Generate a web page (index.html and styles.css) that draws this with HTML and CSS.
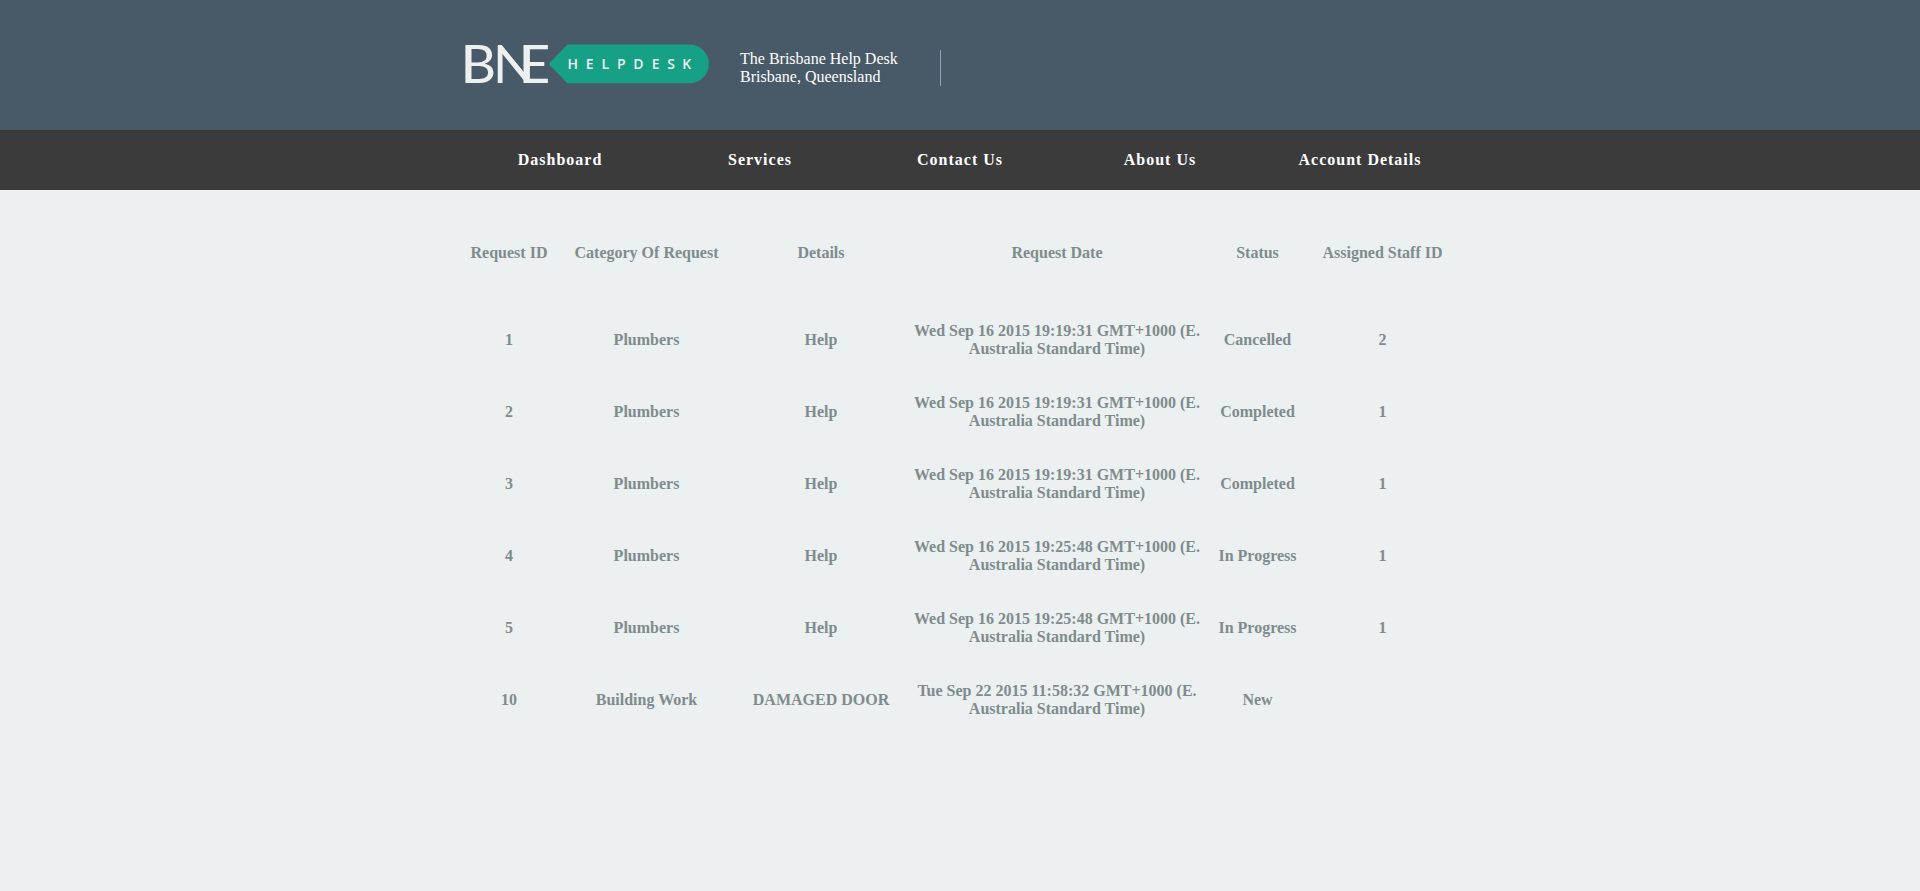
FILE: index.html
```html
<!DOCTYPE html>
<html lang="en">
<head>
<meta charset="utf-8">
<title>BNE Helpdesk</title>
<link rel="stylesheet" href="styles.css">
</head>
<body>
<header class="header">
  <div class="container header-inner">
    <svg class="logo" width="250" height="80" viewBox="0 -18 250 80" role="img" aria-label="BNE Helpdesk">
      <text class="logo-name" transform="translate(0 40.500) scale(1.060 1)" x="0.500 31 55.300">BNE</text>
      <path class="logo-stems" d="M5.800 3.300h5.700v37.200H5.800ZM38.500 3.300H41.500L69.500 37v3.500H66.500ZM65 3.300h4.500v37.200h-4.500Z"/>
      <path class="logo-tag" d="M88.500 22 107.500 2.500H229.500a19.300 19.300 0 0 1 0 38.800H107.500Z"/>
      <text class="logo-word" y="26.600" x="107.500 125.700 141.500 157 173.200 191.700 207.300 222.300">HELPDESK</text>
    </svg>
    <div class="tagline">The Brisbane Help Desk<br>Brisbane, Queensland</div>
  </div>
</header>
<nav class="nav">
  <ul class="container nav-list">
    <li>Dashboard</li><li>Services</li><li>Contact Us</li><li>About Us</li><li>Account Details</li>
  </ul>
</nav>
<main class="container">
  <table class="requests">
    <colgroup><col class="c-id"><col class="c-category"><col class="c-details"><col class="c-date"><col class="c-status"><col class="c-staff"></colgroup>
    <thead>
      <tr><th>Request ID</th><th>Category Of Request</th><th>Details</th><th>Request Date</th><th>Status</th><th>Assigned Staff ID</th></tr>
    </thead>
    <tbody>
      <tr><td>1</td><td>Plumbers</td><td>Help</td><td>Wed Sep 16 2015 19:19:31 GMT+1000 (E. Australia Standard Time)</td><td>Cancelled</td><td>2</td></tr>
      <tr><td>2</td><td>Plumbers</td><td>Help</td><td>Wed Sep 16 2015 19:19:31 GMT+1000 (E. Australia Standard Time)</td><td>Completed</td><td>1</td></tr>
      <tr><td>3</td><td>Plumbers</td><td>Help</td><td>Wed Sep 16 2015 19:19:31 GMT+1000 (E. Australia Standard Time)</td><td>Completed</td><td>1</td></tr>
      <tr><td>4</td><td>Plumbers</td><td>Help</td><td>Wed Sep 16 2015 19:25:48 GMT+1000 (E. Australia Standard Time)</td><td>In Progress</td><td>1</td></tr>
      <tr><td>5</td><td>Plumbers</td><td>Help</td><td>Wed Sep 16 2015 19:25:48 GMT+1000 (E. Australia Standard Time)</td><td>In Progress</td><td>1</td></tr>
      <tr><td>10</td><td>Building Work</td><td>DAMAGED DOOR</td><td>Tue Sep 22 2015 11:58:32 GMT+1000 (E. Australia Standard Time)</td><td>New</td><td></td></tr>
    </tbody>
  </table>
</main>
</body>
</html>
```
FILE: styles.css
```css
* { box-sizing: border-box; }
body {
  margin: 0;
  background: #ecf0f1;
  color: #7f8c8d;
  font: 16px/18px "Liberation Serif", "Times New Roman", serif;
}
.container { width: 1000px; margin: 0 auto; }
.header { height: 130px; background: #485a68; }
.header-inner { display: flex; align-items: flex-start; padding-top: 24px; }
.logo { display: block; overflow: visible; }
.logo-name { fill: #ecf0f1; font-family: Lato, sans-serif; font-size: 52px; }
.logo-stems { fill: #ecf0f1; }
.logo-tag { fill: #16a085; }
.logo-word { fill: #ecf0f1; font-family: "Open Sans", sans-serif; font-size: 14px; font-weight: 600; }
.tagline {
  width: 201px;
  height: 36px;
  margin: 26px 0 0 30px;
  border-right: 1px solid #95a5a6;
  color: #fff;
}
.nav { height: 60px; background: #3b3b3b; }
.nav-list {
  display: grid;
  grid-template-columns: repeat(5, 1fr);
  padding: 0;
  list-style: none;
  color: #fff;
  font-weight: bold;
  letter-spacing: 1px;
  line-height: 60px;
  text-align: center;
}
.requests {
  width: 997px;
  margin-top: 12px;
  table-layout: fixed;
  border-collapse: collapse;
  font-weight: bold;
  text-align: center;
}
.requests th { height: 102px; padding: 0; }
.requests td { height: 72px; padding: 0 5px; vertical-align: middle; }
.c-id { width: 98px; }
.c-category { width: 177px; }
.c-details { width: 172px; }
.c-date { width: 300px; }
.c-status { width: 101px; }
.c-staff { width: 149px; }
```
